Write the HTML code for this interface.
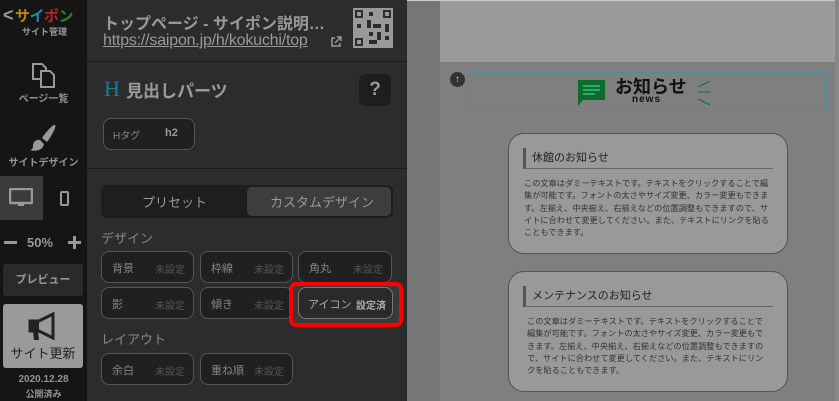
<!DOCTYPE html>
<html><head><meta charset="utf-8"><style>
*{margin:0;padding:0;box-sizing:border-box}
body{width:839px;height:401px;overflow:hidden;background:#7f7f7f;font-family:"Liberation Sans","Noto Sans CJK JP",sans-serif;position:relative}
.a{position:absolute}
#side{left:0;top:0;width:87px;height:401px;background:#151515}
#panel{left:87px;top:0;width:320px;height:401px;background:#2c2c2c}
.lbl{color:#939393;font-weight:bold;font-size:10px;text-align:center;width:87px;left:0}
.btn{border:1px solid #555;border-radius:8px;background:#202020;height:32px;color:#888;font-size:11px}
.btn span{position:absolute;top:8px}
.btn .n{left:10px;color:#848484}
.btn .u{right:8px;color:#555;font-size:10px;top:9px}
.card{background:#999;border:1px solid #555;border-radius:16px;left:508px;width:280px;height:121px}
.card h4{position:absolute;left:14px;top:14px;right:14px;font-size:11px;font-weight:normal;color:#222;border-left:3px solid #555;padding-left:6px;height:21px;line-height:21px;border-bottom:1px solid #666}
.card p{position:absolute;left:15px;top:44px;right:14px;font-size:8.2px;line-height:12.3px;color:#333}
</style></head><body>
<div class="a" style="left:0;top:0;width:839px;height:1px;background:#ccc"></div>
<div class="a" style="left:440px;top:1px;width:395px;height:61px;background:#9b9b9b"></div>
<div class="a" style="left:835px;top:0;width:4px;height:401px;background:#888"></div>

<div id="side" class="a">
 <div class="a" style="left:3px;top:5px;color:#999;font-size:18px;font-weight:bold">&lt;</div>
 <div class="a" style="left:15px;top:5px;font-size:15px;font-weight:bold;letter-spacing:-0.5px"><span style="color:#b80">サ</span><span style="color:#28a">イ</span><span style="color:#b22">ポ</span><span style="color:#282">ン</span></div>
 <div class="a" style="left:22px;top:25px;color:#999;font-size:9px;font-weight:bold">サイト管理</div>
 <svg class="a" style="left:28px;top:60px" width="30" height="30" viewBox="0 0 30 30" fill="none" stroke="#999" stroke-width="2"><path d="M5 4h9l4 4v11H5z"/><path d="M13 11h9l4 4v12H13z" fill="#151515"/></svg>
 <div class="a lbl" style="top:90px">ページ一覧</div>
 <svg class="a" style="left:28px;top:122px" width="30" height="32" viewBox="0 0 30 32"><path d="M27 3c2 1-4 12-8 17l-5-4c4-6 11-14 13-13z" fill="#999"/><path d="M12 18c-5-1-7 3-7 6 0 3-2 4-3 4 6 2 13 0 14-6z" fill="#999"/></svg>
 <div class="a lbl" style="top:154px">サイトデザイン</div>
 <div class="a" style="left:0;top:176px;width:43px;height:44px;background:#3b3b3b"></div>
 <svg class="a" style="left:9px;top:188px" width="24" height="20" viewBox="0 0 24 20"><rect x="1" y="1" width="22" height="14" rx="1" fill="none" stroke="#999" stroke-width="2.5"/><rect x="9" y="15" width="6" height="3" fill="#999"/></svg>
 <div class="a" style="left:60px;top:191px;width:9px;height:15px;border:2px solid #999;border-radius:2px"></div>
 <div class="a" style="left:4px;top:241px;width:13px;height:3px;background:#999"></div>
 <div class="a" style="left:27px;top:235px;color:#999;font-size:13px;font-weight:bold">50%</div>
 <div class="a" style="left:68px;top:241px;width:13px;height:3px;background:#999"></div>
 <div class="a" style="left:73px;top:236px;width:3px;height:13px;background:#999"></div>
 <div class="a" style="left:3px;top:264px;width:80px;height:32px;background:#2a2a2a;border-radius:3px;color:#999;font-size:11px;font-weight:bold;text-align:center;line-height:32px">プレビュー</div>
 <div class="a" style="left:3px;top:304px;width:80px;height:64px;background:#9a9a9a;border-radius:3px"></div>
 <svg class="a" style="left:27px;top:312px" width="32" height="30" viewBox="0 0 32 30"><path d="M3 9h9l14-7v24l-14-7H3z" fill="none" stroke="#222" stroke-width="3"/><path d="M6 19h5l1 9H7z" fill="#222"/><path d="M3 9h9v10H3z" fill="#222"/></svg>
 <div class="a" style="left:3px;top:343px;width:80px;text-align:center;font-size:13px;color:#222">サイト更新</div>
 <div class="a lbl" style="top:374px;font-size:10px">2020.12.28</div>
 <div class="a lbl" style="top:387px;font-size:9px">公開済み</div>
</div>

<div id="panel" class="a">
 <div class="a" style="left:0;top:61px;width:320px;height:1px;background:#1a1a1a"></div>
 <div class="a" style="left:0;top:168px;width:320px;height:1px;background:#1a1a1a"></div>
 <div class="a" style="left:16px;top:10px;color:#999;font-size:16px;font-weight:bold;white-space:nowrap">トップページ - サイポン説明…</div>
 <div class="a" style="left:16px;top:32px;color:#999;font-size:16px;text-decoration:underline;white-space:nowrap;letter-spacing:-0.2px">https://saipon.jp/h/kokuchi/top</div>
 <svg class="a" style="left:243px;top:36px" width="12" height="12" viewBox="0 0 12 12" fill="none" stroke="#999" stroke-width="1.5"><path d="M5 2H2v8h8V7M7 1h4v4M11 1 5 7"/></svg>
 <svg class="a" style="left:266px;top:8px" width="40" height="40" viewBox="0 0 10 10" shape-rendering="crispEdges"><rect width="10" height="10" fill="#999"/><g fill="#2c2c2c"><rect x=".5" y=".5" width="2" height="2"/><rect x="7.5" y=".5" width="2" height="2"/><rect x=".5" y="7.5" width="2" height="2"/><rect x="4" y="1" width="1" height="1"/><rect x="3.5" y="3" width="1" height="2"/><rect x="5" y="4" width="2" height="1"/><rect x="1" y="4" width="1" height="1"/><rect x="6" y="6" width="1" height="2"/><rect x="4" y="6" width="1" height="1"/><rect x="8" y="4" width="1" height="2"/><rect x="4" y="8" width="2" height="1"/><rect x="8" y="7" width="1" height="1"/></g><g fill="#999"><rect x="1" y="1" width="1" height="1"/><rect x="8" y="1" width="1" height="1"/><rect x="1" y="8" width="1" height="1"/></g></svg>
 <div class="a" style="left:17px;top:76px;color:#177c95;font-size:22px;font-family:'Liberation Serif',serif">H</div>
 <div class="a" style="left:39px;top:77px;color:#9a9a9a;font-size:17px;font-weight:bold">見出しパーツ</div>
 <div class="a" style="left:272px;top:74px;width:32px;height:32px;background:#1e1e1e;border-radius:6px;color:#999;font-size:19px;font-weight:bold;text-align:center;line-height:32px">?</div>
 <div class="a btn" style="left:16px;top:118px;width:92px"><span class="n" style="left:9px;font-size:10px">Hタグ</span><span style="left:61px;color:#999;font-weight:bold">h2</span></div>
 <div class="a" style="left:14px;top:185px;width:292px;height:33px;background:#1e1e1e;border-radius:6px"></div>
 <div class="a" style="left:160px;top:187px;width:144px;height:29px;background:#3d3d3d;border-radius:5px"></div>
 <div class="a" style="left:55px;top:192px;color:#999;font-size:13px">プリセット</div>
 <div class="a" style="left:183px;top:192px;color:#999;font-size:13px">カスタムデザイン</div>
 <div class="a" style="left:14px;top:228px;color:#888;font-size:13px">デザイン</div>
 <div class="a btn" style="left:14px;top:251px;width:93px"><span class="n">背景</span><span class="u">未設定</span></div>
 <div class="a btn" style="left:113px;top:251px;width:93px"><span class="n">枠線</span><span class="u">未設定</span></div>
 <div class="a btn" style="left:211px;top:251px;width:94px"><span class="n">角丸</span><span class="u">未設定</span></div>
 <div class="a btn" style="left:14px;top:287px;width:93px"><span class="n">影</span><span class="u">未設定</span></div>
 <div class="a btn" style="left:113px;top:287px;width:93px"><span class="n">傾き</span><span class="u">未設定</span></div>
 <div class="a" style="left:202px;top:282px;width:114px;height:45px;border:4px solid #f00;border-radius:7px;background:#3a3a3a"></div>
 <div class="a btn" style="left:211px;top:287px;width:95px;background:#2a2a2a;border-color:#777"><span class="n" style="left:9px;color:#aaa">アイコン</span><span class="u" style="color:#aaa;font-weight:bold;right:6px">設定済</span></div>
 <div class="a" style="left:14px;top:329px;color:#888;font-size:13px">レイアウト</div>
 <div class="a btn" style="left:14px;top:353px;width:93px"><span class="n">余白</span><span class="u">未設定</span></div>
 <div class="a btn" style="left:113px;top:353px;width:93px"><span class="n">重ね順</span><span class="u">未設定</span></div>
</div>
<div class="a" style="left:407px;top:1px;width:33px;height:400px;background:#767676"></div>

<div class="a" style="left:450px;top:72px;width:15px;height:15px;border-radius:50%;background:#333;color:#ccc;font-size:10px;text-align:center;line-height:15px;font-weight:bold">↑</div>
<div class="a" style="left:467px;top:72px;width:360px;height:40px;border:1px solid #4a8e9e;border-radius:2px"></div>
<svg class="a" style="left:577px;top:79px" width="30" height="28" viewBox="0 0 30 28"><path d="M1 1h27v20H6l-5 6z" fill="#0d6b2c"/><path d="M6 7h17M6 11h17M6 15h12" stroke="#4c9" stroke-width="1.3"/></svg>
<div class="a" style="left:615px;top:73px;font-size:18px;font-weight:bold;color:#111">お知らせ</div>
<div class="a" style="left:632px;top:94px;font-size:10px;font-weight:bold;color:#111;letter-spacing:1px">news</div>
<svg class="a" style="left:696px;top:80px" width="16" height="26" viewBox="0 0 16 26" stroke="#1d7a40" stroke-width="1.3" fill="none"><path d="M14 1 2 7M2 12h13M2 19l12 6"/></svg>

<div class="a card" style="top:133px"><h4>休館のお知らせ</h4><p>この文章はダミーテキストです。テキストをクリックすることで編集が可能です。フォントの太さやサイズ変更、カラー変更もできます。左揃え、中央揃え、右揃えなどの位置調整もできますので、サイトに合わせて変更してください。また、テキストにリンクを貼ることもできます。</p></div>
<div class="a card" style="top:271px"><h4>メンテナンスのお知らせ</h4><p style="left:18px;right:18px">この文章はダミーテキストです。テキストをクリックすることで編集が可能です。フォントの太さやサイズ変更、カラー変更もできます。左揃え、中央揃え、右揃えなどの位置調整もできますので、サイトに合わせて変更してください。また、テキストにリンクを貼ることもできます。</p></div>
</body></html>
